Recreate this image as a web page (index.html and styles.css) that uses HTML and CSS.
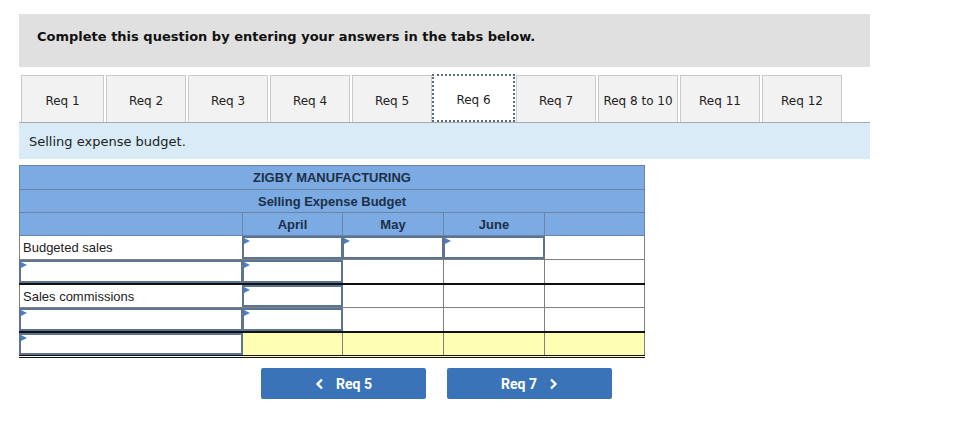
FILE: index.html
```html
<!DOCTYPE html>
<html>
<head>
<meta charset="utf-8">
<link rel="stylesheet" href="styles.css">
</head>
<body>
<div class="page">
  <div class="intro">Complete this question by entering your answers in the tabs below.</div>
  <div class="tabs">
    <div class="tab first">Req 1</div>
    <div class="tab">Req 2</div>
    <div class="tab">Req 3</div>
    <div class="tab">Req 4</div>
    <div class="tab">Req 5</div>
    <div class="tab active">Req 6</div>
    <div class="tab">Req 7</div>
    <div class="tab">Req 8 to 10</div>
    <div class="tab">Req 11</div>
    <div class="tab">Req 12</div>
  </div>
  <div class="prompt">Selling expense budget.</div>
  <table class="budget">
    <colgroup>
      <col class="c-label"><col class="c-num"><col class="c-num2"><col class="c-num2"><col class="c-num">
    </colgroup>
    <tr class="hd top"><td colspan="5">ZIGBY MANUFACTURING</td></tr>
    <tr class="hd"><td colspan="5">Selling Expense Budget</td></tr>
    <tr class="hd"><td></td><td>April</td><td>May</td><td>June</td><td></td></tr>
    <tr>
      <td class="lbl">Budgeted sales</td>
      <td class="in"><div class="box"></div></td>
      <td class="in"><div class="box"></div></td>
      <td class="in"><div class="box"></div></td>
      <td></td>
    </tr>
    <tr>
      <td class="in"><div class="box"></div></td>
      <td class="in"><div class="box"></div></td>
      <td></td><td></td><td></td>
    </tr>
    <tr class="sep">
      <td class="lbl">Sales commissions</td>
      <td class="in"><div class="box"></div></td>
      <td></td><td></td><td></td>
    </tr>
    <tr>
      <td class="in"><div class="box"></div></td>
      <td class="in"><div class="box"></div></td>
      <td></td><td></td><td></td>
    </tr>
    <tr class="sep total">
      <td class="in"><div class="box"></div></td>
      <td class="y"></td><td class="y"></td><td class="y"></td><td class="y"></td>
    </tr>
  </table>
  <div class="nav">
    <button class="btn"><svg class="chev" width="9" height="12" viewBox="0 0 9 12"><polyline points="7,1.5 2.5,6 7,10.5" fill="none" stroke="#fff" stroke-width="2.4"/></svg><span>Req 5</span></button>
    <button class="btn"><span>Req 7</span><svg class="chev" width="9" height="12" viewBox="0 0 9 12"><polyline points="2,1.5 6.5,6 2,10.5" fill="none" stroke="#fff" stroke-width="2.4"/></svg></button>
  </div>
</div>
</body>
</html>
```
FILE: styles.css
```css
html, body { margin: 0; padding: 0; background: #fff; }
.page { padding: 14px 0 0 19px; width: 851px; font-family: "DejaVu Sans", Verdana, sans-serif; }
.intro {
  background: #e0e0e0; height: 53px; box-sizing: border-box;
  padding: 15px 18px 0; font-size: 13px; font-weight: bold; color: #111;
  line-height: 16px;
}
.tabs {
  display: flex; gap: 2px; margin-top: 8px; padding-left: 2px;
  border-bottom: 1px solid #aaa; height: 47px;
}
.tab {
  width: 80px; height: 47px; box-sizing: border-box; padding-top: 3px;
  background: #f2f2f2; border: 1px solid #cacaca; border-bottom: none;
  display: flex; align-items: center; justify-content: center;
  font-size: 12px; color: #222;
}
.tab.first { width: 83px; }
.tab.active {
  background: #fff; height: 48px; margin-top: -1px;
  border: 2px dotted #5b6b80;
  margin-left: -2px; margin-right: -1px; width: 83px; position: relative; z-index: 1;
}
.prompt {
  background: #daebf8; height: 36px; box-sizing: border-box;
  padding: 10px 10px 0; font-size: 13px; color: #222; line-height: 18px;
}
.budget {
  margin-top: 6px; border-collapse: collapse; table-layout: fixed; width: 625px;
  font-family: "Liberation Sans", Arial, sans-serif; font-size: 13px; color: #222;
}
.c-label { width: 223px; }
.c-num { width: 100px; }
.c-num2 { width: 101px; }
.budget td { border: 1px solid #808080; height: 23px; padding: 0; }
.budget tr.hd td {
  background: #7babe2; color: #1d2f48; font-weight: bold; text-align: center;
  border-color: #6a85a8; height: 22px;
}
.budget tr.hd.top td { height: 23px; }
.budget td.lbl { padding-left: 3px; padding-top: 0; }
.budget td.in { padding: 0; }
.box {
  position: relative; height: 23px; box-sizing: border-box;
  border: 2px solid #5c7391; margin: -1px;
  background: #fff;
}
.box::before {
  content: ""; position: absolute; left: 0; top: 0;
  border-left: 6px solid #4a7fc1; border-top: 3.5px solid transparent; border-bottom: 3.5px solid transparent;
}
.budget tr.sep td { border-top: 2px solid #111; height: 22px; }
.budget tr.sep .box { height: 22px; }
.budget tr.total td { border-bottom: 3px double #111; }
.budget td.y { background: #ffffb3; }
.nav { display: flex; gap: 21px; padding-left: 242px; margin-top: 10px; }
.btn {
  width: 165px; height: 31px; border: none; border-radius: 2px; background: #3b73b9;
  color: #fff; font-family: Roboto, "Liberation Sans", sans-serif; font-weight: bold; font-size: 14px;
  display: flex; align-items: center; justify-content: center; gap: 12px; padding: 0;
}
.chev { display: block; }
```
